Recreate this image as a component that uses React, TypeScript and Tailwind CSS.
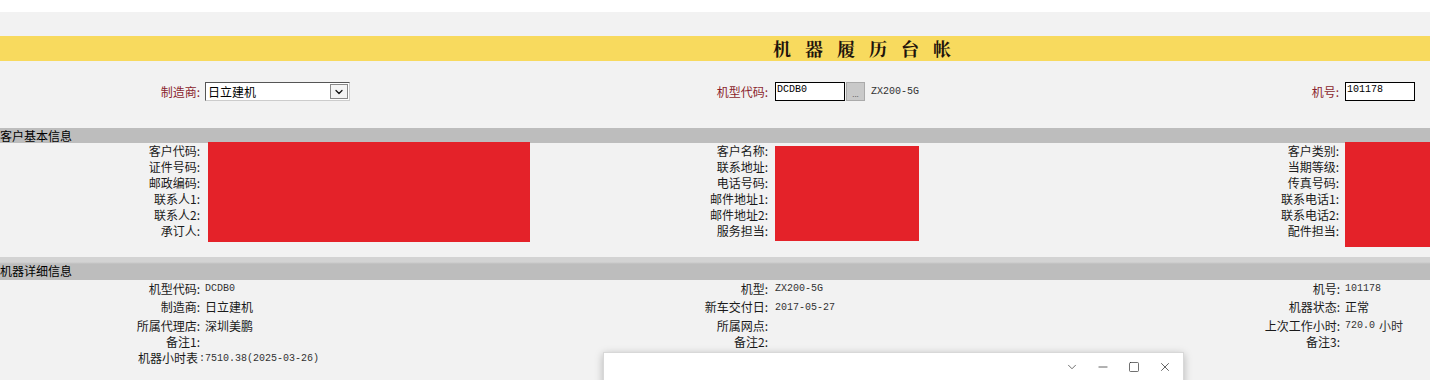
import React from "react";
import { ChevronDown, Minus, Square, X } from "lucide-react";

const cjk = "font-['Noto_Sans_CJK_SC','Noto_Sans',sans-serif]";
const mono = "font-['Liberation_Mono',monospace]";

function CustLabels({ labels, w }: { labels: string[]; w: string }) {
  return (
    <div className={`${w} shrink-0 flex flex-col text-right text-[12px] leading-[16px] text-[#1a1a1a]`}>
      {labels.map((l) => (
        <div key={l} className="h-[16px] whitespace-nowrap">{l}</div>
      ))}
    </div>
  );
}

function DCell({ label, value, isMono, lw = "w-[200px]", gap = "ml-[5px]" }: { label: string; value?: string; isMono?: boolean; lw?: string; gap?: string }) {
  return (
    <div className="flex items-center">
      <div className={`${lw} shrink-0 text-right text-[12px] leading-[16px] text-[#1a1a1a] whitespace-nowrap`}>{label}</div>
      {value ? (
        <div className={`${gap} whitespace-nowrap ${isMono ? `${mono} text-[10px] text-[#333]` : "text-[12px] text-[#1a1a1a]"}`}>{value}</div>
      ) : null}
    </div>
  );
}

export default function App() {
  return (
    <div className={`w-[1430px] h-[380px] bg-[#f2f2f2] relative overflow-hidden ${cjk}`}>
      <div className="h-[12px] bg-white" />
      <div className="h-[24px]" />
      {/* title band */}
      <div className="h-[25px] bg-[#f8da5e] flex items-center pl-[773px]">
        <span className="text-[18px] font-bold tracking-[14px] text-[#1e140c] leading-[25px] font-['Noto_Serif_CJK_SC','Noto_Sans_CJK_SC',serif]">机器履历台帐</span>
      </div>
      {/* top inputs row */}
      <div className="h-[67px] grid grid-cols-[570px_570px_290px] items-start pt-[21px]">
        <div className="flex items-center">
          <div className="w-[200px] text-right text-[12px] text-[#8a1f2d] leading-[19px]">制造商:</div>
          <div className="ml-[5px] w-[145px] h-[19px] bg-white border border-[#555] border-r-[#ccc] border-b-[#ccc] flex items-center justify-between">
            <span className="pl-[2px] text-[12px] leading-[17px] text-black">日立建机</span>
            <span className="w-[18px] h-[15px] mr-[1px] border border-[#888] bg-[#f4f4f4] flex items-center justify-center">
              <ChevronDown size={12} strokeWidth={2.5} color="#111" />
            </span>
          </div>
        </div>
        <div className="flex items-center">
          <div className="w-[198px] text-right text-[12px] text-[#8a1f2d] leading-[19px]">机型代码:</div>
          <div className="ml-[7px] w-[70px] h-[19px] bg-white border border-black flex items-start">
            <span className={`${mono} text-[10px] leading-[14px] pl-[1px] text-black`}>DCDB0</span>
          </div>
          <div className="ml-[1px] w-[19px] h-[19px] bg-[#c9c9c9] border border-[#aaa] flex items-end justify-center">
            <span className="text-[8px] leading-[12px] text-[#666]">...</span>
          </div>
          <span className={`ml-[6px] ${mono} text-[10px] text-[#333]`}>ZX200-5G</span>
        </div>
        <div className="flex items-center">
          <div className="w-[199px] text-right text-[12px] text-[#8a1f2d] leading-[19px]">机号:</div>
          <div className="ml-[6px] w-[70px] h-[19px] bg-white border border-black flex items-start">
            <span className={`${mono} text-[10px] leading-[14px] pl-[1px] text-black`}>101178</span>
          </div>
        </div>
      </div>
      {/* band 1 */}
      <div className="h-[15px] bg-[#bdbdbd] text-[12px] leading-[16px] text-black whitespace-nowrap">客户基本信息</div>
      {/* customer info */}
      <div className="h-[114px] grid grid-cols-[570px_570px_290px] items-start">
        <div className="flex items-start">
          <CustLabels w="w-[200px]" labels={["客户代码:", "证件号码:", "邮政编码:", "联系人1:", "联系人2:", "承订人:"]} />
          <div className="ml-[8px] -mt-[1px] w-[322px] h-[100px] bg-[#e42229]" />
        </div>
        <div className="flex items-start">
          <CustLabels w="w-[198px]" labels={["客户名称:", "联系地址:", "电话号码:", "邮件地址1:", "邮件地址2:", "服务担当:"]} />
          <div className="ml-[7px] mt-[3px] w-[144px] h-[95px] bg-[#e42229]" />
        </div>
        <div className="flex items-start">
          <CustLabels w="w-[199px]" labels={["客户类别:", "当期等级:", "传真号码:", "联系电话1:", "联系电话2:", "配件担当:"]} />
          <div className="ml-[6px] -mt-[1px] flex-1 h-[105px] bg-[#e42229]" />
        </div>
      </div>
      {/* band 2 */}
      <div className="h-[23px] bg-[linear-gradient(to_bottom,#d3d3d3_0px,#d3d3d3_5px,#bdbdbd_7px,#bdbdbd_100%)] pt-[6px] text-[12px] leading-[16px] text-black whitespace-nowrap">机器详细信息</div>
      {/* details */}
      <div className="grid grid-cols-[570px_570px_290px] grid-rows-[17px_20px_17px_16px_16px]">
        <DCell label="机型代码:" value="DCDB0" isMono />
        <DCell label="机型:" value="ZX200-5G" isMono lw="w-[198px]" gap="ml-[7px]" />
        <DCell label="机号:" value="101178" isMono gap="ml-[5px]" />

        <DCell label="制造商:" value="日立建机" />
        <DCell label="新车交付日:" value="2017-05-27" isMono lw="w-[198px]" gap="ml-[7px]" />
        <DCell label="机器状态:" value="正常" />

        <DCell label="所属代理店:" value="深圳美鹏" />
        <DCell label="所属网点:" lw="w-[198px]" />
        <div className="flex items-center">
          <div className="w-[200px] shrink-0 text-right text-[12px] leading-[16px] text-[#1a1a1a] whitespace-nowrap">上次工作小时:</div>
          <div className="ml-[5px] whitespace-nowrap flex items-center">
            <span className={`${mono} text-[10px] text-[#333]`}>720.0</span>
            <span className="ml-[4px] text-[12px] text-[#333]">小时</span>
          </div>
        </div>

        <DCell label="备注1:" />
        <DCell label="备注2:" lw="w-[198px]" />
        <DCell label="备注3:" />

        <DCell label="机器小时表" value=":7510.38(2025-03-26)" isMono lw="w-[198px]" gap="ml-[1px]" />
        <div />
        <div />
      </div>
      {/* overlay window */}
      <div className="absolute left-[603px] top-[352px] w-[581px] h-[40px] bg-white border border-[#d8d8d8] shadow-[0_2px_8px_rgba(0,0,0,0.25)]">
        <div className="flex items-center justify-end h-[27px] pr-[11px] text-[#333]">
          <ChevronDown size={14} strokeWidth={1.2} />
          <Minus size={14} strokeWidth={1.3} className="ml-[17px]" />
          <Square size={12} strokeWidth={1.4} className="ml-[18px]" />
          <X size={14} strokeWidth={1.3} className="ml-[18px]" />
        </div>
      </div>
    </div>
  );
}
